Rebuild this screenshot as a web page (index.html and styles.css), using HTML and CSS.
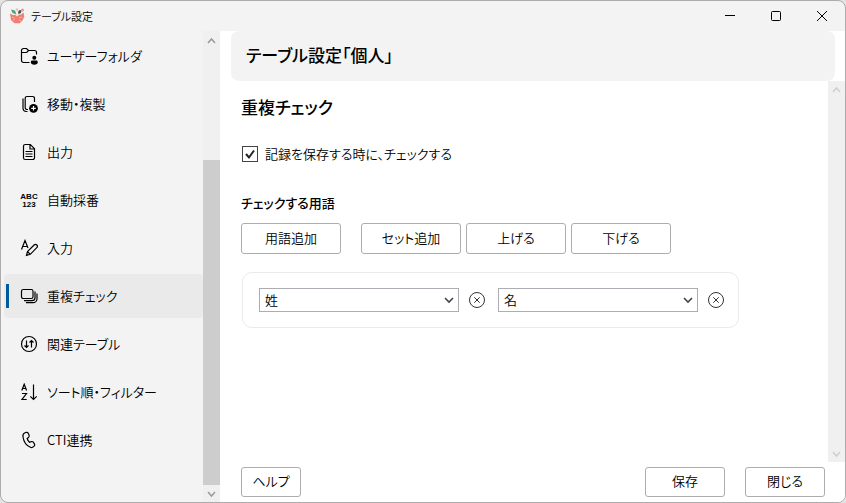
FILE: index.html
```html
<!DOCTYPE html>
<html lang="ja">
<head>
    <meta charset="UTF-8">
    <meta name="viewport" content="width=device-width, initial-scale=1.0">
    <title>テーブル設定</title>
    <link rel="stylesheet" href="styles.css">
</head>
<body>

<div class="window">
  <header class="titlebar">
    <svg class="app-icon" viewBox="0 0 16 16" aria-hidden="true">
      <path d="M1 5.500L4 7l8-.5 2.500-2 .8 4-1.500 3.500L11 15.300H5.500L2 12z" fill="#ee7f72"/>
      <path d="M3 9l2.500 1M4 12l2-1M10 10l3-1M10 12l2 1" stroke="#f7b5a8" stroke-width="1"/>
      <path d="M2 1.500l4 1 1.500 4L3.500 5z" fill="#4fa67c"/>
      <path d="M6.500 1l2-1 1 2-1.500 1.500z" fill="#f3b9b4"/>
      <path d="M9 4l1.500-2 2 .5-.5 2.500-2.500 1z" fill="#41584e"/>
      <circle cx="13.500" cy="2" r="1.500" fill="#ef8fae"/>
      <path d="M6 6.500l2-1 2 1.500-2 1.500z" fill="#fbe3dc"/>
    </svg>
    <span class="titlebar-text">テーブル設定</span>
    <button class="win-btn" type="button" aria-label="最小化">
      <svg viewBox="0 0 12 12"><path d="M1 5.500h10"/></svg>
    </button>
    <button class="win-btn" type="button" aria-label="最大化">
      <svg viewBox="0 0 12 12"><rect x="1.500" y="1.500" width="9" height="9" rx="1"/></svg>
    </button>
    <button class="win-btn" type="button" aria-label="ウィンドウを閉じる">
      <svg viewBox="0 0 12 12"><path d="M1 1l10 10M11 1L1 11"/></svg>
    </button>
  </header>

  <div class="columns">
    <nav class="sidebar">
      <a class="nav-item" href="#folder">
        <svg class="nav-icon" viewBox="0 0 18 18">
          <path d="M9.500 15.500H3.500a2 2 0 0 1-2-2v-10a2 2 0 0 1 2-2h3l2 2h6a2 2 0 0 1 2 2v2M1.500 5.500h4.500a2 2 0 0 0 1.500-.8l1-1.200"/>
          <circle class="solid" cx="14.300" cy="10.700" r="2"/>
          <path class="solid" d="M10.800 15.200c0-1.200.7-1.700 1.500-1.700h4c.8 0 1.500.5 1.500 1.700 0 1.600-1.500 2.500-3.500 2.500s-3.500-.9-3.500-2.500z"/>
        </svg>
        <span>ユーザーフォルダ</span>
      </a>
      <a class="nav-item" href="#move">
        <svg class="nav-icon" viewBox="0 0 18 18">
          <path d="M8 14.500H7A1.800 1.800 0 0 1 5.200 12.700V3.300A1.800 1.800 0 0 1 7 1.500h5.700a1.800 1.800 0 0 1 1.800 1.800V7M3 3.500v9.500a3.500 3.500 0 0 0 3.500 3.500h1"/>
          <circle class="solid" cx="13.500" cy="13.300" r="4.400"/>
          <path class="plus" d="M13.500 11v4.600M11.200 13.300h4.600"/>
        </svg>
        <span>移動・複製</span>
      </a>
      <a class="nav-item" href="#output">
        <svg class="nav-icon" viewBox="0 0 18 18">
          <path d="M5.300 1.500h5l4.200 4.200v9a1.800 1.800 0 0 1-1.800 1.800H5.300a1.800 1.800 0 0 1-1.800-1.800V3.300a1.800 1.800 0 0 1 1.800-1.800M10 1.700v4.300h4.500M5.500 8.500h7M5.500 11h7M5.500 13.500h7"/>
        </svg>
        <span>出力</span>
      </a>
      <a class="nav-item" href="#number">
        <svg class="nav-icon" viewBox="0 0 18 18">
          <text class="icon-abc" x="9" y="8" text-anchor="middle">ABC</text>
          <text class="icon-abc" x="9" y="16" text-anchor="middle">123</text>
        </svg>
        <span>自動採番</span>
      </a>
      <a class="nav-item" href="#input">
        <svg class="nav-icon" viewBox="0 0 18 18">
          <path d="M1.500 10.500l3.500-9 3 7.500M2.800 7.500h4.700M6.500 16.300l1-3.800 6.600-6.500a1.900 1.900 0 0 1 2.700 2.700l-6.500 6.600zM7.500 12.500l2.800 2.800"/>
        </svg>
        <span>入力</span>
      </a>
      <a class="nav-item active" href="#duplicate" aria-current="page">
        <svg class="nav-icon" viewBox="0 0 18 18">
          <rect x="1.500" y="2.500" width="11.500" height="9" rx="1.800"/>
          <path d="M4 13.700h8a3 3 0 0 0 3-3V4.500M6 15.700h7a4 4 0 0 0 4-4V6.500"/>
        </svg>
        <span>重複チェック</span>
      </a>
      <a class="nav-item" href="#relation">
        <svg class="nav-icon" viewBox="0 0 18 18">
          <circle cx="9" cy="9" r="7.500"/>
          <path d="M6.500 5.500v7M4.500 10.500l2 2 2-2M11.500 12.500v-7M9.500 7.500l2-2 2 2"/>
        </svg>
        <span>関連テーブル</span>
      </a>
      <a class="nav-item" href="#sort">
        <svg class="nav-icon" viewBox="0 0 18 18">
          <path d="M1.800 7.500l2.400-6.300 2.400 6.300M2.600 5.500h3.200M2 10.500h4.500L2 16.500h4.700M13.500 1.500v15M10.300 13.300l3.200 3.200 3.200-3.200"/>
        </svg>
        <span>ソート順・フィルター</span>
      </a>
      <a class="nav-item" href="#cti">
        <svg class="nav-icon" viewBox="0 0 18 18">
          <path d="M5 1.800l1.300-.4c.8-.2 1.600.2 1.900.9l.9 2c.3.700.1 1.400-.4 1.900L7.200 7.500c.3 1.300 1.100 2.600 2.200 3.700l2-.6c.7-.2 1.400 0 1.900.6l1.100 1.600c.5.700.4 1.500-.1 2.100l-.8.8c-.8.800-2 1.100-3.100.6C6.300 14.700 3.800 11 3 6c-.3-1.900.4-3.700 2-4.200z"/>
        </svg>
        <span>CTI連携</span>
      </a>
    </nav>

    <div class="scrollbar side-scroll">
      <svg class="arrow" viewBox="0 0 17 17"><path d="M5 10l3.500-4 3.500 4"/></svg>
      <div class="thumb"></div>
      <svg class="arrow" viewBox="0 0 17 17"><path d="M5 7l3.500 4L12 7"/></svg>
    </div>

    <main class="main">
      <h1 class="page-title">テーブル設定「個人」</h1>

      <div class="scroll-area">
        <section class="content">
          <h2>重複チェック</h2>
          <label class="check">
            <input type="checkbox" checked>
            <svg class="check-mark" viewBox="0 0 16 16"><path d="M4 8l3 3.500 5-7"/></svg>
            <span>記録を保存する時に、チェックする</span>
          </label>

          <h3>チェックする用語</h3>
          <div class="tools">
            <button class="btn add" type="button">用語追加</button>
            <button class="btn" type="button">セット追加</button>
            <button class="btn" type="button">上げる</button>
            <button class="btn" type="button">下げる</button>
          </div>

          <div class="terms">
            <div class="term">
              <div class="combo">
                <select aria-label="用語1"><option>姓</option><option>名</option></select>
                <svg class="chevron" viewBox="0 0 10 10"><path d="M1 3l4 4 4-4"/></svg>
              </div>
              <button class="remove" type="button" aria-label="姓を削除">
                <svg viewBox="0 0 18 18"><circle cx="9" cy="9" r="7.500"/><path d="M6.300 6.300l5.400 5.400M11.700 6.300l-5.400 5.400"/></svg>
              </button>
            </div>
            <div class="term">
              <div class="combo">
                <select aria-label="用語2"><option>名</option><option>姓</option></select>
                <svg class="chevron" viewBox="0 0 10 10"><path d="M1 3l4 4 4-4"/></svg>
              </div>
              <button class="remove" type="button" aria-label="名を削除">
                <svg viewBox="0 0 18 18"><circle cx="9" cy="9" r="7.500"/><path d="M6.300 6.300l5.400 5.400M11.700 6.300l-5.400 5.400"/></svg>
              </button>
            </div>
          </div>
        </section>

        <div class="scrollbar disabled">
          <svg class="arrow" viewBox="0 0 17 17"><path d="M5 11l3.500-4 3.500 4"/></svg>
          <svg class="arrow" viewBox="0 0 17 17"><path d="M5 7l3.500 4L12 7"/></svg>
        </div>
      </div>

      <footer class="footer">
        <button class="btn help" type="button">ヘルプ</button>
        <button class="btn" type="button">保存</button>
        <button class="btn" type="button">閉じる</button>
      </footer>
    </main>
  </div>
</div>

</body>
</html>
```

FILE: styles.css
```css
* {
    box-sizing: border-box;
}

body {
    margin: 0;
    background: #e4e4e4;
    color: #000;
    font-family: "Noto Sans CJK JP", sans-serif;
    font-size: 13px;
    font-weight: 350;
    line-height: 20px;
    font-feature-settings: "palt";
}

button, select {
    font: inherit;
    font-feature-settings: inherit;
    color: inherit;
}

svg {
    display: block;
    fill: none;
    stroke: currentColor;
}

.window {
    display: flex;
    flex-direction: column;
    height: 100vh;
    border: 1px solid #acacac;
    border-radius: 8px;
    background: #f3f3f3;
    overflow: hidden;
}

/* タイトルバー */
.titlebar {
    display: flex;
    align-items: center;
    height: 30px;
    padding-left: 8px;
}

.app-icon {
    width: 16px;
    height: 16px;
    stroke: none;
}

.titlebar-text {
    flex: 1;
    padding-left: 6px;
    font-size: 11px;
}

.win-btn {
    display: flex;
    align-items: center;
    justify-content: center;
    width: 46px;
    height: 30px;
    padding: 0;
    border: none;
    background: none;
}

.win-btn svg {
    width: 12px;
    height: 12px;
}

.columns {
    display: flex;
    flex: 1;
    min-height: 0;
}

/* 左メニュー */
.sidebar {
    display: flex;
    flex-direction: column;
    gap: 4px;
    width: 202px;
    padding: 3px 0 0 3px;
    overflow: hidden;
}

.nav-item {
    display: flex;
    flex-shrink: 0;
    align-items: center;
    gap: 9px;
    height: 44px;
    padding: 0 0 1px 16px;
    border-radius: 4px;
    color: #000;
    font-size: 13px;
    text-decoration: none;
}

.nav-item.active {
    padding-left: 2px;
    background: #eaeaea;
}

.nav-item.active::before {
    content: "";
    width: 3px;
    height: 24px;
    margin-right: 2px;
    background: #005a9e;
}

.nav-icon {
    width: 18px;
    height: 18px;
    stroke-width: 1.2;
}

.nav-icon .solid {
    fill: #000;
    stroke: none;
}

.nav-icon .plus {
    stroke: #fff;
}

.icon-abc {
    fill: #000;
    stroke: none;
    font-family: "Liberation Sans", sans-serif;
    font-size: 8px;
    font-weight: bold;
}

/* スクロールバー */
.scrollbar {
    display: flex;
    flex-direction: column;
    justify-content: space-between;
    flex-shrink: 0;
    width: 17px;
    background: #f0f0f0;
    color: #9a9a9a;
}

.scrollbar.disabled {
    color: #cfcfcf;
}

.arrow {
    width: 17px;
    height: 17px;
    stroke-width: 1.5;
}

.side-scroll .arrow:first-child {
    margin-top: 2px;
}

.thumb {
    height: 69%;
    margin-top: auto;
    background: #cdcdcd;
}

/* 右側 */
.main {
    display: flex;
    flex: 1;
    flex-direction: column;
    min-width: 0;
    background: #fff;
}

.page-title {
    margin: 0 10px 0 11px;
    padding: 11px 15px 13px;
    border-radius: 8px;
    background: #f3f3f3;
    font-size: 17px;
    font-weight: 500;
    line-height: 26px;
}

.scroll-area {
    display: flex;
    flex: 1;
    min-height: 0;
}

.content {
    flex: 1;
    padding: 13px 0 0 21px;
}

.content h2 {
    margin: 0 0 22px;
    font-size: 17px;
    font-weight: 500;
    line-height: 26px;
}

.check {
    display: inline-grid;
    grid-template-columns: 16px auto;
    column-gap: 7px;
    align-items: center;
    padding-left: 1px;
    line-height: 24px;
}

.check input {
    grid-area: 1 / 1;
    appearance: none;
    width: 16px;
    height: 16px;
    margin: 0;
    border: 1px solid #444;
    background: #fff;
}

.check-mark {
    grid-area: 1 / 1;
    width: 16px;
    height: 16px;
    stroke: #222;
    stroke-width: 2;
    pointer-events: none;
    visibility: hidden;
}

.check input:checked + .check-mark {
    visibility: visible;
}

.content h3 {
    margin: 26px 0 10px;
    font-size: 13px;
    font-weight: 500;
    line-height: 20px;
}

.tools {
    display: flex;
    gap: 5px;
}

.btn {
    width: 80px;
    height: 30px;
    padding: 0 0 2px;
    border: 1px solid #adadad;
    border-radius: 3px;
    background: #fff;
}

.tools .btn {
    width: 100px;
    height: 31px;
}

.tools .add {
    margin-right: 15px;
}

.terms {
    display: inline-flex;
    gap: 12px;
    margin: 18px 0 0 1px;
    padding: 15px 13px 15px 16px;
    border: 1px solid #eaeaea;
    border-radius: 10px;
}

.term {
    display: flex;
    align-items: center;
    gap: 9px;
}

.combo {
    display: grid;
    align-items: center;
    width: 200px;
}

.combo select {
    grid-area: 1 / 1;
    appearance: none;
    width: 100%;
    height: 24px;
    padding: 0 5px;
    border: 1px solid #abadb3;
    border-radius: 0;
    background: #fff;
}

.chevron {
    grid-area: 1 / 1;
    justify-self: end;
    width: 10px;
    height: 10px;
    margin-right: 5px;
    stroke: #444;
    stroke-width: 1.6;
    pointer-events: none;
}

.remove {
    width: 18px;
    height: 18px;
    padding: 0;
    border: none;
    background: none;
    color: #333;
}

.footer {
    display: flex;
    gap: 20px;
    padding: 5px 20px 5px 21px;
}

.footer .help {
    width: 60px;
    margin-right: auto;
}
```
